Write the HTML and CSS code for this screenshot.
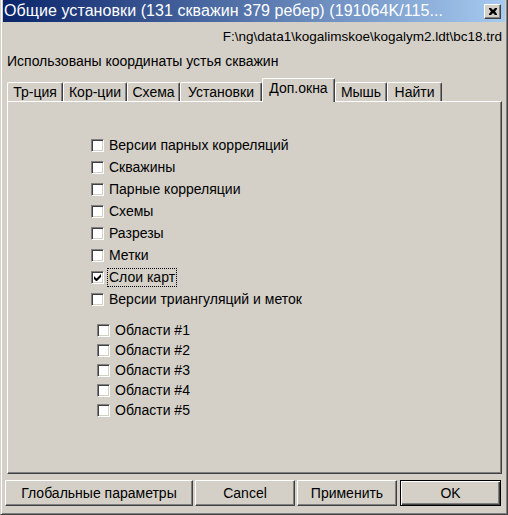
FILE: index.html
```html
<!DOCTYPE html>
<html lang="ru">
<head>
  <meta charset="UTF-8">
  <title>Общие установки</title>
  <link rel="stylesheet" href="styles.css">
</head>
<body>
  <div class="window">
    <div class="titlebar">
      <span class="title">Общие установки (131 скважин 379 ребер) (191064K/115...</span>
      <span class="close">
        <svg width="8" height="7" viewBox="0 0 8 7"><path d="M0 0h2l2 2 2-2h2v1L6 3.5 8 6v1H6L4 5 2 7H0V6l2-2.5L0 1z" fill="#000"/></svg>
      </span>
    </div>
    <div class="content">
      <div class="path">F:\ng\data1\kogalimskoe\kogalym2.ldt\bc18.trd</div>
      <div class="note">Использованы координаты устья скважин</div>

      <div class="tabs">
        <div class="tab">Тр-ция</div>
        <div class="tab">Кор-ции</div>
        <div class="tab">Схема</div>
        <div class="tab">Установки</div>
        <div class="tab active">Доп.окна</div>
        <div class="tab">Мышь</div>
        <div class="tab">Найти</div>
      </div>

      <div class="panel">
        <ul class="checks windows">
          <li><span class="box"></span>Версии парных корреляций</li>
          <li><span class="box"></span>Скважины</li>
          <li><span class="box"></span>Парные корреляции</li>
          <li><span class="box"></span>Схемы</li>
          <li><span class="box"></span>Разрезы</li>
          <li><span class="box"></span>Метки</li>
          <li><span class="box checked"><svg width="7" height="7" viewBox="0 0 7 7"><path d="M0 2v3l2 2h1l4-4V0L2.5 4.5z" fill="#000"/></svg></span><span class="focus">Слои карт</span></li>
          <li><span class="box"></span>Версии триангуляций и меток</li>
        </ul>
        <ul class="checks areas">
          <li><span class="box"></span>Области #1</li>
          <li><span class="box"></span>Области #2</li>
          <li><span class="box"></span>Области #3</li>
          <li><span class="box"></span>Области #4</li>
          <li><span class="box"></span>Области #5</li>
        </ul>
      </div>

      <div class="buttons">
        <button class="btn wide">Глобальные параметры</button>
        <button class="btn">Cancel</button>
        <button class="btn">Применить</button>
        <button class="btn default">OK</button>
      </div>
    </div>
  </div>
</body>
</html>
```

FILE: styles.css
```css
* {
  box-sizing: border-box;
}
body {
  margin: 0;
  background: #d4d0c8;
  font-family: 'Liberation Sans', Arial, sans-serif;
  font-size: 14px;
  color: #000;
}
.window {
  width: 508px;
  height: 515px;
  background: #d4d0c8;
  border-left: 1px solid #d4d0c8;
  border-right: 1px solid #404040;
  border-bottom: 1px solid #404040;
  box-shadow: inset 1px 0 #fff, inset -1px -1px #808080;
  padding: 0 2px;
  display: flex;
  flex-direction: column;
}
.titlebar {
  height: 22px;
  background: linear-gradient(to right, #0a246a, #a6caf0);
  display: flex;
  align-items: center;
  justify-content: space-between;
  padding: 0 4px 0 1px;
}
.title {
  color: #fff;
  font-size: 16px;
  letter-spacing: 0.07px;
  white-space: nowrap;
  overflow: hidden;
}
.close {
  width: 17px;
  height: 15px;
  background: #d4d0c8;
  border: 1px solid;
  border-color: #fff #404040 #404040 #fff;
  box-shadow: inset -1px -1px #808080;
  display: flex;
  align-items: center;
  justify-content: center;
}
.content {
  flex: 1;
  padding: 0 3px 0 4px;
  display: flex;
  flex-direction: column;
}
.path {
  text-align: right;
  font-size: 13.5px;
  margin-top: 7px;
  height: 16px;
  line-height: 16px;
}
.note {
  margin-top: 8px;
  height: 16px;
  line-height: 16px;
}
.tabs {
  display: grid;
  grid-template-columns: 56px 64px 53px 82px 73px 52px 55px;
  align-items: end;
  margin-top: 9px;
  height: 23px;
  position: relative;
  z-index: 1;
}
.tab {
  height: 19px;
  padding-top: 1px;
  border-left: 1px solid #fff;
  border-top: 1px solid #fff;
  border-right: 1px solid #404040;
  box-shadow: inset -1px 0 #808080;
  border-radius: 2px 2px 0 0;
  line-height: 17px;
  text-align: center;
  white-space: nowrap;
}
.tab.active {
  height: 24px;
  margin-bottom: -1px;
  background: #d4d0c8;
  padding-bottom: 4px;
  line-height: 16px;
}
.panel {
  height: 373px;
  border: 1px solid;
  border-color: #fff #404040 #404040 #fff;
  box-shadow: inset -1px -1px #808080;
  padding-top: 32px;
}
.checks {
  list-style: none;
  margin: 0;
  padding: 0;
}
.checks li {
  display: flex;
  align-items: center;
}
.windows {
  padding-left: 83px;
}
.windows li {
  height: 22px;
}
.areas {
  margin-top: 10px;
  padding-left: 89px;
}
.areas li {
  height: 20px;
}
.box {
  width: 13px;
  height: 13px;
  margin-right: 5px;
  background: #fff;
  border: 1px solid;
  border-color: #808080 #fff #fff #808080;
  box-shadow: inset 1px 1px #404040, inset -1px -1px #d4d0c8;
  display: flex;
  align-items: center;
  justify-content: center;
}
.focus {
  outline: 1px dotted #000;
  padding: 0 1px;
  margin-left: -1px;
  line-height: 17px;
}
.buttons {
  display: flex;
  gap: 2px;
  margin-top: 6px;
  margin-left: -2px;
}
.btn {
  height: 26px;
  width: 100px;
  font-family: inherit;
  font-size: 14px;
  background: #d4d0c8;
  border: 1px solid;
  border-color: #fff #404040 #404040 #fff;
  box-shadow: inset -1px -1px #808080;
  padding: 0;
  color: #000;
}
.btn.wide {
  width: 188px;
}
.btn.default {
  width: 101px;
  margin-left: 1px;
  border: 1px solid #000;
  box-shadow: inset 1px 1px #fff, inset -1px -1px #404040, inset -2px -2px #808080;
}
```
